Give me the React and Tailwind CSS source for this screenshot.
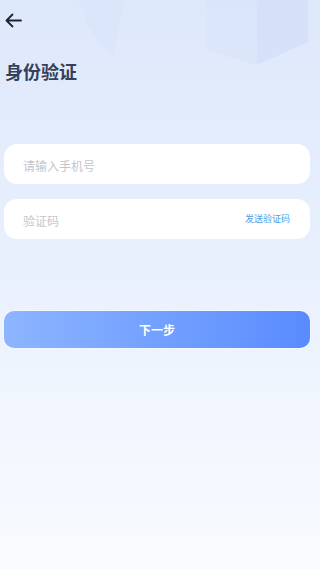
import React from 'react';

const App = () => {
    return (
        <div
            className="relative w-[320px] h-[569px] overflow-hidden bg-gradient-to-b from-[#dde8fb] via-[#eaf1fd] to-[#f9fbff]"
            style={{ fontFamily: '"Noto Sans CJK SC", "Noto Sans", sans-serif' }}
        >
            {/* faint background shapes */}
            <svg className="absolute top-0 left-0" width="320" height="120" viewBox="0 0 320 120">
                <polygon points="78,0 125,0 118,30 113,55 100,45 88,25" fill="#d6e3fa" opacity="0.35" />
                <polygon points="207,0 257,0 257,65 207,50" fill="#d6e3fa" opacity="0.45" />
                <polygon points="257,0 308,0 308,42 257,65" fill="#cfdcf8" opacity="0.6" />
            </svg>

            <div className="relative flex flex-col pl-[4px] pr-[10px]">
                <div className="h-[40px] flex items-center pl-[1px]">
                    <svg width="17" height="15" viewBox="0 0 17 15" fill="none">
                        <path d="M16 7.5H2 M7.5 1.5L1.5 7.5L7.5 13.5" stroke="#1f2430" strokeWidth="1.8" strokeLinecap="round" strokeLinejoin="round" />
                    </svg>
                </div>

                <h1 className="mt-[19px] pl-[1px] text-[18px] leading-[24px] font-bold text-[#34405a]">身份验证</h1>

                <div className="mt-[61px] h-[40px] rounded-[13px] bg-white flex items-center pl-[19px] pt-[4px]">
                    <span className="text-[12px] text-[#c3c6cd]">请输入手机号</span>
                </div>

                <div className="mt-[15px] h-[40px] rounded-[13px] bg-white flex items-center justify-between pl-[19px] pr-[20px] pt-[4px]">
                    <span className="text-[12px] text-[#c3c6cd]">验证码</span>
                    <span className="text-[9px] text-[#4aa0ee] -mt-[4px]">发送验证码</span>
                </div>

                <button className="mt-[72px] h-[37px] rounded-[10px] bg-gradient-to-r from-[#8db5ff] to-[#5a8bff] flex items-center justify-center shadow-[0_0_0_1px_rgba(255,255,255,0.4)]">
                    <span className="text-[12px] font-bold text-white">下一步</span>
                </button>
            </div>
        </div>
    );
};

export default App;
